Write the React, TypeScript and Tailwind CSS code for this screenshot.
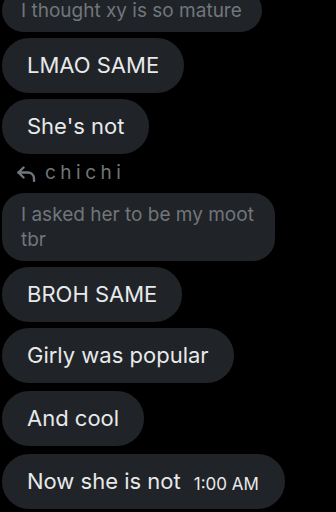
import React from "react";

const font = { fontFamily: 'Inter, "Noto Sans", sans-serif' };

function Bubble({ children, extra = "" }: { children: React.ReactNode; extra?: string }) {
  return (
    <div className={`self-start h-[55px] flex items-center rounded-[27px] bg-[#202327] px-[25px] text-[22px] text-[#e7e9ea] whitespace-nowrap ${extra}`}>
      {children}
    </div>
  );
}

function Quote({ children, w }: { children: React.ReactNode; w: string }) {
  return (
    <div className={`self-start rounded-[22px] bg-[#202327] pl-[19px] pr-[16px] py-[9px] text-[19px] leading-[25px] text-[#71767b] ${w}`}>
      {children}
    </div>
  );
}

export default function App() {
  return (
    <div className="w-[336px] h-[512px] overflow-hidden bg-black" style={font}>
      <div className="flex flex-col gap-[6px] pl-[2px] -mt-[11px]">
        <Quote w="w-[260px]">I thought xy is so mature</Quote>
        <Bubble>LMAO SAME</Bubble>
        <Bubble>She's not</Bubble>
        <div className="h-[27px] flex items-center pl-[15px] gap-[9px] text-[#71767b]">
          <svg width="19" height="16" viewBox="0 0 19 16" fill="none" stroke="#71767b" strokeWidth="2.4" strokeLinecap="round" strokeLinejoin="round">
            <path d="M6.5 1.5 L1.5 6.5 L6.5 11.5" />
            <path d="M1.5 6.5 H11 a6 6 0 0 1 6 6 V15" />
          </svg>
          <span className="text-[19px] tracking-[4.5px]">chichi</span>
        </div>
        <Quote w="w-[273px]">I asked her to be my moot tbr</Quote>
        <Bubble>BROH SAME</Bubble>
        <Bubble>Girly was popular</Bubble>
        <Bubble extra="mt-[2px]">And cool</Bubble>
        <div className="self-start mt-[2px] h-[55px] flex items-center rounded-[27px] bg-[#202327] pl-[25px] pr-[26px] text-[#e7e9ea] whitespace-nowrap">
          <span className="text-[22px]">Now she is not</span>
          <span className="ml-[13px] mt-[6px] text-[17px]">1:00 AM</span>
        </div>
      </div>
    </div>
  );
}
